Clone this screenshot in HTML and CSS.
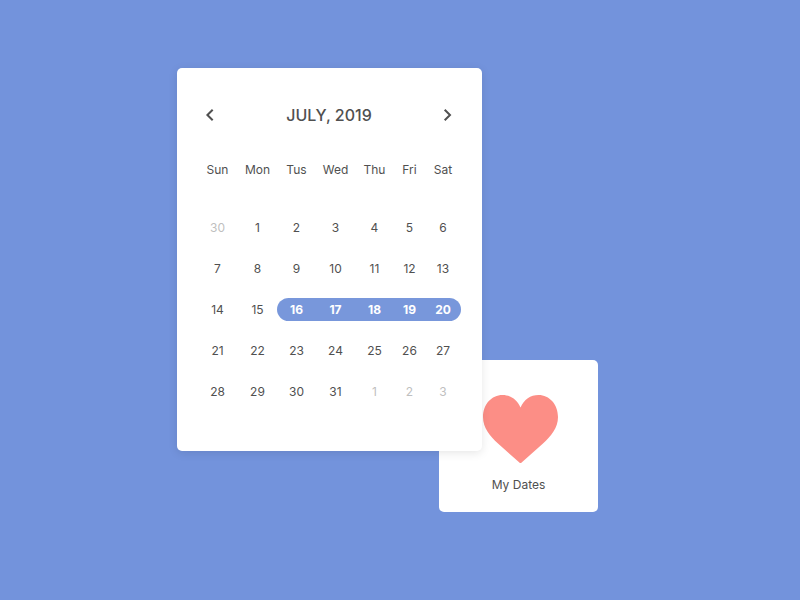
FILE: index.html
```html
<!DOCTYPE html>
<html lang="en">
<head>
<meta charset="utf-8">
<meta name="viewport" content="width=device-width, initial-scale=1">
<title>July, 2019</title>
<link rel="stylesheet" href="styles.css">
</head>
<body>
<main class="stage">
  <section class="card calendar">
    <header class="calendar-head">
      <button class="nav" type="button" aria-label="Previous month">
        <svg viewBox="0 0 16 16" width="16" height="16"><path d="M10.700 2.700 L5.400 8 L10.700 13.300"/></svg>
      </button>
      <h1 class="title">JULY, 2019</h1>
      <button class="nav" type="button" aria-label="Next month">
        <svg viewBox="0 0 16 16" width="16" height="16"><path d="M4.700 2.700 L10 8 L4.700 13.300"/></svg>
      </button>
    </header>
    <table class="days">
      <colgroup><col class="sunday"><col class="weekday" span="4"><col class="friday"><col class="saturday"></colgroup>
      <thead>
        <tr><th>Sun</th><th>Mon</th><th>Tus</th><th>Wed</th><th>Thu</th><th>Fri</th><th>Sat</th></tr>
      </thead>
      <tbody>
        <tr><td class="muted">30</td><td>1</td><td>2</td><td>3</td><td>4</td><td>5</td><td>6</td></tr>
        <tr><td>7</td><td>8</td><td>9</td><td>10</td><td>11</td><td>12</td><td>13</td></tr>
        <tr><td>14</td><td>15</td><td class="picked first">16</td><td class="picked">17</td><td class="picked">18</td><td class="picked">19</td><td class="picked last">20</td></tr>
        <tr><td>21</td><td>22</td><td>23</td><td>24</td><td>25</td><td>26</td><td>27</td></tr>
        <tr><td>28</td><td>29</td><td>30</td><td>31</td><td class="muted">1</td><td class="muted">2</td><td class="muted">3</td></tr>
      </tbody>
    </table>
  </section>
  <a class="card dates" href="#dates">
    <svg class="heart" viewBox="0 0 75 68" width="75" height="68" aria-hidden="true"><path d="M37.500 12.500 C34 4.500 27.500 0 19.500 0 C8.500 0 0 9.500 0 22 C0 33 7 41 15 48.500 L37.500 68.500 L60 48.500 C68 41 75 33 75 22 C75 9.500 66.500 0 55.500 0 C47.500 0 41 4.500 37.500 12.500 Z"/></svg>
    <span>My Dates</span>
  </a>
</main>
</body>
</html>
```
FILE: styles.css
```css
* {
  box-sizing: border-box;
}

body {
  margin: 0;
  min-height: 100vh;
  display: flex;
  align-items: center;
  justify-content: center;
  padding: 0 25px 20px 0;
  background: #7393dc;
  color: #505050;
  font-family: Inter, "Liberation Sans", sans-serif;
  font-size: 12px;
  line-height: 23px;
}

.stage {
  display: flex;
  align-items: flex-end;
}

.card {
  background: #fff;
  border-radius: 5px;
}

.calendar {
  position: relative;
  z-index: 1;
  margin-bottom: 61px;
  padding: 35px 21px 39px 20px;
  box-shadow: 0 2px 10px rgba(0, 0, 0, 0.1);
}

.calendar-head {
  display: flex;
  align-items: center;
  justify-content: space-between;
  padding: 0 5px;
}

.nav {
  display: flex;
  padding: 0;
  border: 0;
  background: none;
  color: inherit;
  cursor: pointer;
}

.nav path {
  fill: none;
  stroke: currentColor;
  stroke-width: 2;
}

.title {
  margin: 0;
  font-size: 16px;
  font-weight: 500;
  line-height: 24px;
}

.days {
  margin-top: 31px;
  border-collapse: collapse;
  table-layout: fixed;
  width: 264px;
}

.sunday {
  width: 41px;
}

.weekday {
  width: 39px;
}

.friday {
  width: 31px;
}

.saturday {
  width: 36px;
}

th,
td {
  padding: 0;
  text-align: center;
  font-weight: 400;
}

thead th {
  height: 49px;
  padding-bottom: 26px;
}

td {
  padding: 9px 0;
}

.muted {
  color: #bfbfbf;
}

.picked {
  background: #7897db content-box;
  color: #fff;
  font-weight: 700;
}

.first {
  border-radius: 12px 0 0 12px / 21px 0 0 21px;
}

.last {
  border-radius: 0 12px 12px 0 / 0 21px 21px 0;
}

.dates {
  display: flex;
  flex-direction: column;
  align-items: center;
  gap: 10px;
  margin-left: -43px;
  padding: 35px 40px 16px;
  color: inherit;
  text-decoration: none;
}

.heart {
  margin-left: 4px;
  fill: #fc8e86;
}
```
